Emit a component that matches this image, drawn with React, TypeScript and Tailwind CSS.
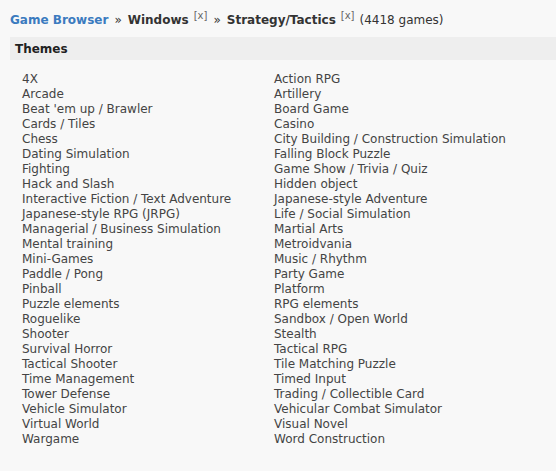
const left = [
  "4X",
  "Arcade",
  "Beat 'em up / Brawler",
  "Cards / Tiles",
  "Chess",
  "Dating Simulation",
  "Fighting",
  "Hack and Slash",
  "Interactive Fiction / Text Adventure",
  "Japanese-style RPG (JRPG)",
  "Managerial / Business Simulation",
  "Mental training",
  "Mini-Games",
  "Paddle / Pong",
  "Pinball",
  "Puzzle elements",
  "Roguelike",
  "Shooter",
  "Survival Horror",
  "Tactical Shooter",
  "Time Management",
  "Tower Defense",
  "Vehicle Simulator",
  "Virtual World",
  "Wargame",
];

const right = [
  "Action RPG",
  "Artillery",
  "Board Game",
  "Casino",
  "City Building / Construction Simulation",
  "Falling Block Puzzle",
  "Game Show / Trivia / Quiz",
  "Hidden object",
  "Japanese-style Adventure",
  "Life / Social Simulation",
  "Martial Arts",
  "Metroidvania",
  "Music / Rhythm",
  "Party Game",
  "Platform",
  "RPG elements",
  "Sandbox / Open World",
  "Stealth",
  "Tactical RPG",
  "Tile Matching Puzzle",
  "Timed Input",
  "Trading / Collectible Card",
  "Vehicular Combat Simulator",
  "Visual Novel",
  "Word Construction",
];

export default function App() {
  return (
    <div className="min-h-[471px] bg-[#f8f8f8] pl-[10px] pt-[10px] font-['DejaVu_Sans',sans-serif] text-[12px] text-[#333]">
      {/* breadcrumb */}
      <div className="flex items-baseline h-[17px] text-[12px] pt-[1px]">
        <a className="font-bold text-[#3b7bbf]">Game Browser</a>
        <span className="mx-[6px]">»</span>
        <span className="font-bold">Windows</span>
        <sup className="ml-[5px] text-[10px] text-[#666]">[x]</sup>
        <span className="mx-[6px]">»</span>
        <span className="font-bold">Strategy/Tactics</span>
        <sup className="ml-[5px] text-[10px] text-[#666]">[x]</sup>
        <span className="ml-[5px]">(4418 games)</span>
      </div>

      {/* themes header */}
      <div className="mt-[10px] h-[23px] bg-[#eeeeee] pl-[5px] flex items-center font-bold text-[#222]">
        Themes
      </div>

      {/* theme list */}
      <div className="grid grid-cols-[252px_1fr] pl-[12px] pt-[12px] leading-[15px] text-[#444]">
        <ul>
          {left.map((t) => (
            <li key={t}>{t}</li>
          ))}
        </ul>
        <ul>
          {right.map((t) => (
            <li key={t}>{t}</li>
          ))}
        </ul>
      </div>
    </div>
  );
}
